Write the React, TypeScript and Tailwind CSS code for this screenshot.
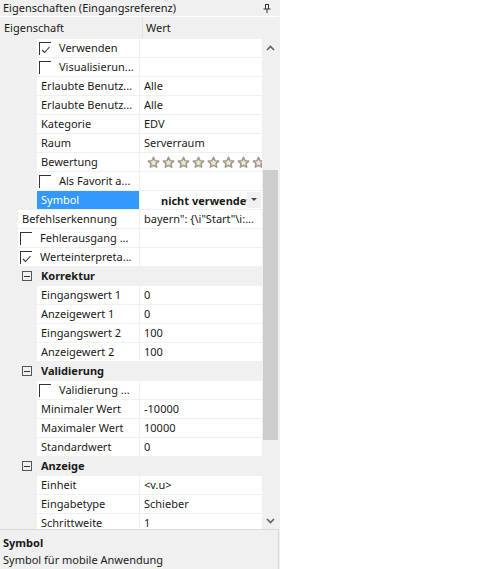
import React from 'react';

type Row =
    | { kind: 'cat'; label: string }
    | { kind: 'prop'; level: 1 | 2; label: string; value?: React.ReactNode; check?: boolean; checked?: boolean; selected?: boolean };

const Star = () => (
    <svg width="13" height="13" viewBox="0 0 24 24" className="shrink-0">
        <path
            d="M12 2.5l2.9 6.2 6.7.7-5 4.6 1.4 6.6L12 17.3l-6 3.3 1.4-6.6-5-4.6 6.7-.7z"
            fill="#ece7da"
            stroke="#a39a86"
            strokeWidth="2.8"
            strokeLinejoin="round"
        />
    </svg>
);

const Stars = () => (
    <div className="flex gap-[2px] pl-[7px] overflow-hidden">
        {Array.from({ length: 9 }).map((_, i) => <Star key={i} />)}
    </div>
);

const SymbolValue = () => (
    <div className="flex items-center h-full w-full">
        <span className="ml-[21px] flex-1 min-w-0 overflow-hidden whitespace-nowrap font-bold">nicht verwendet</span>
        <div className="w-[14px] h-[16px] shrink-0 bg-[#f0f0f0] flex items-center justify-center mr-px">
            <svg width="6" height="4" viewBox="0 0 6 4"><path d="M0 0h6L3 3z" fill="#444" /></svg>
        </div>
    </div>
);

const rows: Row[] = [
    { kind: 'prop', level: 2, label: 'Verwenden', check: true, checked: true },
    { kind: 'prop', level: 2, label: 'Visualisierun...', check: true },
    { kind: 'prop', level: 2, label: 'Erlaubte Benutz...', value: 'Alle' },
    { kind: 'prop', level: 2, label: 'Erlaubte Benutz...', value: 'Alle' },
    { kind: 'prop', level: 2, label: 'Kategorie', value: 'EDV' },
    { kind: 'prop', level: 2, label: 'Raum', value: 'Serverraum' },
    { kind: 'prop', level: 2, label: 'Bewertung', value: <Stars /> },
    { kind: 'prop', level: 2, label: 'Als Favorit a...', check: true },
    { kind: 'prop', level: 2, label: 'Symbol', value: <SymbolValue />, selected: true },
    { kind: 'prop', level: 1, label: 'Befehlserkennung', value: 'bayern": {\\i"Start"\\i:...' },
    { kind: 'prop', level: 1, label: 'Fehlerausgang ...', check: true },
    { kind: 'prop', level: 1, label: 'Werteinterpreta...', check: true, checked: true },
    { kind: 'cat', label: 'Korrektur' },
    { kind: 'prop', level: 2, label: 'Eingangswert 1', value: '0' },
    { kind: 'prop', level: 2, label: 'Anzeigewert 1', value: '0' },
    { kind: 'prop', level: 2, label: 'Eingangswert 2', value: '100' },
    { kind: 'prop', level: 2, label: 'Anzeigewert 2', value: '100' },
    { kind: 'cat', label: 'Validierung' },
    { kind: 'prop', level: 2, label: 'Validierung ...', check: true },
    { kind: 'prop', level: 2, label: 'Minimaler Wert', value: '-10000' },
    { kind: 'prop', level: 2, label: 'Maximaler Wert', value: '10000' },
    { kind: 'prop', level: 2, label: 'Standardwert', value: '0' },
    { kind: 'cat', label: 'Anzeige' },
    { kind: 'prop', level: 2, label: 'Einheit', value: '<v.u>' },
    { kind: 'prop', level: 2, label: 'Eingabetype', value: 'Schieber' },
    { kind: 'prop', level: 2, label: 'Schrittweite', value: '1' },
];

const CheckBox = ({ checked }: { checked?: boolean }) => (
    <div className="w-[12px] h-[13px] border-l border-t border-[#333] ml-[2px] mr-[8px] shrink-0 relative">
        {checked && (
            <svg width="10" height="8" viewBox="0 0 10 8" className="absolute left-[1px] top-[3px]">
                <path d="M1 4l2.5 2.5L8.5 1" fill="none" stroke="#333" strokeWidth="1.1" />
            </svg>
        )}
    </div>
);

function PropRow({ row }: { row: Extract<Row, { kind: 'prop' }> }) {
    return (
        <div className="h-[19px] pt-px flex shrink-0">
            <div className={row.level === 2 ? 'w-[37px] shrink-0' : 'w-[18px] shrink-0'} />
            <div
                className={
                    'flex items-center h-full shrink-0 overflow-hidden whitespace-nowrap ' +
                    (row.level === 2 ? 'w-[102px] ' : 'w-[121px] ') +
                    (row.selected ? 'bg-[#3399ff] text-white pl-[4px]' : 'bg-white ' + (row.check ? '' : 'pl-[4px]'))
                }
            >
                {row.check && <CheckBox checked={row.checked} />}
                <span className="-mt-px">{row.label}</span>
            </div>
            <div className="ml-px flex-1 min-w-0 bg-white h-full overflow-hidden whitespace-nowrap">
                {typeof row.value === 'string' ? (
                    <div className="pl-[4px] h-full flex items-center"><span className="-mt-px">{row.value}</span></div>
                ) : (
                    <div className="h-full flex items-center">{row.value}</div>
                )}
            </div>
        </div>
    );
}

function CatRow({ label }: { label: string }) {
    return (
        <div className="h-[19px] pt-px flex items-center shrink-0">
            <div className="ml-[22px] w-[10px] h-[10px] border border-[#555] flex items-center justify-center">
                <div className="w-[6px] h-px bg-[#333]" />
            </div>
            <span className="ml-[9px] font-bold -mt-px">{label}</span>
        </div>
    );
}

export default function App() {
    return (
        <div
            className="w-[484px] h-[569px] bg-white flex text-[11px] text-[#1a1a1a] leading-none"
            style={{ fontFamily: '"Noto Sans", "Open Sans", sans-serif' }}
        >
            <div className="w-[280px] h-full bg-[#f0f0f0] flex flex-col">
                {/* Title */}
                <div className="h-[16px] flex items-center justify-between pl-[3px] pr-[9px]">
                    <span className="-mt-px">Eigenschaften (Eingangsreferenz)</span>
                    <svg width="8" height="9" viewBox="0 0 8 9">
                        <path d="M2 0.5h4M2.5 0.5v4.5M5.5 0.5v4.5M0.5 5h7M4 5v4" fill="none" stroke="#333" strokeWidth="1" />
                    </svg>
                </div>
                <div className="h-px bg-white mr-px" />

                {/* Header */}
                <div className="h-[21px] flex items-center">
                    <div className="w-[143px] pl-[4px] h-full flex items-center border-r border-[#e3e3e3]">Eigenschaft</div>
                    <div className="pl-[3px]">Wert</div>
                </div>

                {/* Body */}
                <div className="h-[491px] flex overflow-hidden">
                    <div className="w-[262px] flex flex-col overflow-hidden">
                        {rows.map((r, i) =>
                            r.kind === 'cat' ? <CatRow key={i} label={r.label} /> : <PropRow key={i} row={r} />
                        )}
                    </div>
                    <div className="w-[17px] flex flex-col">
                        <div className="h-[17px] flex items-center justify-center mt-[1px]">
                            <svg width="9" height="6" viewBox="0 0 9 6">
                                <path d="M1 5l3.5-3.5L8 5" fill="none" stroke="#606060" strokeWidth="1.6" />
                            </svg>
                        </div>
                        <div className="mt-[114px] h-[270px] mx-px bg-[#cdcdcd]" />
                        <div className="flex-1" />
                        <div className="h-[17px] flex items-center justify-center">
                            <svg width="9" height="6" viewBox="0 0 9 6">
                                <path d="M1 1l3.5 3.5L8 1" fill="none" stroke="#606060" strokeWidth="1.6" />
                            </svg>
                        </div>
                    </div>
                </div>

                {/* Description */}
                <div className="flex-1 border-t border-r border-[#dadada] mr-px pl-[3px] pt-[7px] flex flex-col gap-[6px]">
                    <span className="font-bold">Symbol</span>
                    <span>Symbol für mobile Anwendung</span>
                </div>
            </div>
        </div>
    );
}
